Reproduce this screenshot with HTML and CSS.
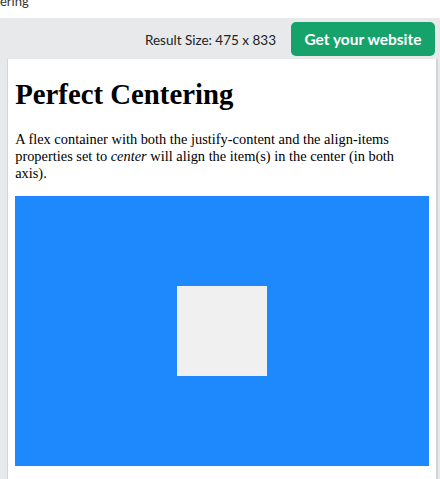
FILE: index.html
```html
<!DOCTYPE html>
<html>
<head>
<meta charset="utf-8">
<link rel="stylesheet" href="styles.css">
</head>
<body>
<div class="tab"><span class="tab-title">ering</span></div>
<div class="main">
  <div class="toolbar">
    <span class="result-size">Result Size: 475 x 833</span>
    <a class="get-btn">Get your website</a>
  </div>
  <div class="frame">
    <h1 class="title">Perfect Centering</h1>
    <p class="desc">A flex container with both the justify-content and the align-items properties set to <em>center</em> will align the item(s) in the center (in both axis).</p>
    <div class="flex-container">
      <div class="flex-item"></div>
    </div>
  </div>
</div>
</body>
</html>
```

FILE: styles.css
```css
html, body {
  margin: 0;
  padding: 0;
}
body {
  width: 440px;
  height: 479px;
  overflow: hidden;
  background: #ffffff;
  font-family: "Liberation Serif", serif;
}
.tab {
  height: 18px;
  overflow: hidden;
  background: #ffffff;
}
.tab-title {
  display: block;
  margin-top: -6px;
  font-family: "Lato", sans-serif;
  font-size: 13px;
  line-height: 14px;
  color: #333333;
}
.main {
  background: #e7e9eb;
  height: 461px;
  display: flex;
  flex-direction: column;
}
.toolbar {
  display: flex;
  justify-content: flex-end;
  align-items: center;
  gap: 15px;
  padding: 4px 5px 3px 0;
}
.result-size {
  font-family: "Lato", sans-serif;
  font-size: 13.5px;
  color: #222222;
  padding-top: 1px;
}
.get-btn {
  display: flex;
  align-items: center;
  justify-content: center;
  width: 144px;
  height: 34px;
  background: #16a26b;
  color: #ffffff;
  border-radius: 5px;
  font-family: "Lato", sans-serif;
  font-weight: 700;
  font-size: 15.5px;
}
.frame {
  flex: 1;
  display: flow-root;
  margin: 0 2.5px 0 8px;
  background: #ffffff;
  box-shadow: -1px 0 0 #d6d6d6;
  border-right: 2px solid #d4d4d4;
  padding: 0 6.7px 0 7.2px;
}
.title {
  font-size: 28.8px;
  font-weight: 700;
  margin: 19.3px 0;
}
.desc {
  font-size: 14.4px;
  margin: 14.4px 0;
}
.flex-container {
  display: flex;
  justify-content: center;
  align-items: center;
  height: 270px;
  background: #1e88fd;
}
.flex-item {
  width: 90px;
  height: 90px;
  background: #f0f0f0;
}
```
